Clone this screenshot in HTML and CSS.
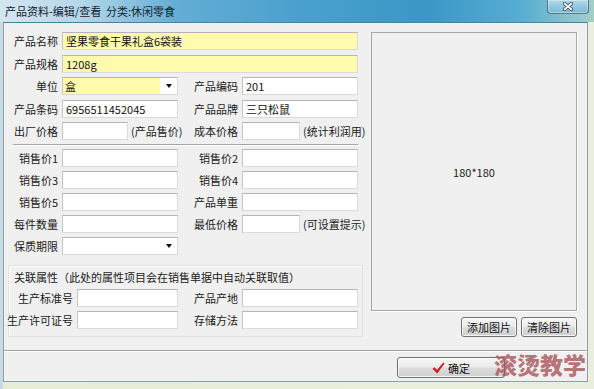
FILE: index.html
```html
<!DOCTYPE html>
<html lang="zh-CN">
<head>
    <meta charset="UTF-8">
    <title>产品资料-编辑/查看</title>
    <link rel="stylesheet" href="styles.css">
</head>
<body>
    <div class="window">
        <div class="titlebar">
            <span class="title">产品资料-编辑/查看&nbsp;&nbsp;分类:休闲零食</span>
            <span class="close">
                <svg width="10" height="9" viewBox="0 0 10 9">
                    <path d="M1.5 1.5 L8.5 7.5 M8.5 1.5 L1.5 7.5" stroke="#2a3b48" stroke-width="3.4" stroke-linecap="round"/>
                    <path d="M1.5 1.5 L8.5 7.5 M8.5 1.5 L1.5 7.5" stroke="#fff" stroke-width="1.8" stroke-linecap="round"/>
                </svg>
            </span>
        </div>

        <div class="panel">
            <div class="content">
                <div class="form">
                    <div class="grid grid-top">
                        <label class="lbl">产品名称</label>
                        <input class="field yellow span3" value="坚果零食干果礼盒6袋装" readonly>

                        <label class="lbl">产品规格</label>
                        <input class="field yellow span3" value="1208g" readonly>

                        <label class="lbl">单位</label>
                        <div class="combo">
                            <span class="val yellow">盒</span>
                            <span class="arrow"></span>
                        </div>
                        <label class="lbl">产品编码</label>
                        <input class="field" value="201" readonly>

                        <label class="lbl">产品条码</label>
                        <input class="field" value="6956511452045" readonly>
                        <label class="lbl">产品品牌</label>
                        <input class="field" value="三只松鼠" readonly>

                        <label class="lbl">出厂价格</label>
                        <div class="cell">
                            <input class="field short" readonly>
                            <span class="note">(产品售价)</span>
                        </div>
                        <label class="lbl">成本价格</label>
                        <div class="cell">
                            <input class="field shorter" readonly>
                            <span class="note">(统计利润用)</span>
                        </div>
                    </div>

                    <div class="sep"></div>

                    <div class="grid grid-mid">
                        <label class="lbl">销售价1</label>
                        <input class="field" readonly>
                        <label class="lbl">销售价2</label>
                        <input class="field" readonly>

                        <label class="lbl">销售价3</label>
                        <input class="field" readonly>
                        <label class="lbl">销售价4</label>
                        <input class="field" readonly>

                        <label class="lbl">销售价5</label>
                        <input class="field" readonly>
                        <label class="lbl">产品单重</label>
                        <input class="field" readonly>

                        <label class="lbl">每件数量</label>
                        <input class="field" readonly>
                        <label class="lbl">最低价格</label>
                        <div class="cell">
                            <input class="field shorter" readonly>
                            <span class="note">(可设置提示)</span>
                        </div>

                        <label class="lbl">保质期限</label>
                        <div class="combo">
                            <span class="val"></span>
                            <span class="arrow"></span>
                        </div>
                    </div>

                    <div class="group">
                        <div class="group-title">关联属性（此处的属性项目会在销售单据中自动关联取值）</div>
                        <div class="grid grid-group">
                            <label class="lbl">生产标准号</label>
                            <input class="field" readonly>
                            <label class="lbl">产品产地</label>
                            <input class="field" readonly>

                            <label class="lbl">生产许可证号</label>
                            <input class="field" readonly>
                            <label class="lbl">存储方法</label>
                            <input class="field" readonly>
                        </div>
                    </div>
                </div>

                <div class="side">
                    <div class="picture">180*180</div>
                    <div class="pic-buttons">
                        <button class="btn">添加图片</button>
                        <button class="btn">清除图片</button>
                    </div>
                </div>
            </div>

            <div class="footer">
                <button class="btn ok">
                    <svg width="13" height="12" viewBox="0 0 13 12">
                        <path d="M0.5 6.8 L2.6 5.2 L5 8 L11.2 0.4 L12.6 1.4 L5.2 11.6 Z" fill="#cc1c1c"/>
                    </svg>
                    确定
                </button>
            </div>
        </div>

        <div class="watermark">滚烫教学</div>
    </div>
</body>
</html>
```

FILE: styles.css
```css
* {
    box-sizing: border-box;
}
body {
    margin: 0;
    font-family: "Noto Sans CJK SC", "Microsoft YaHei", sans-serif;
    font-size: 11px;
    color: #1a1a1a;
}
.window {
    position: relative;
    width: 594px;
    height: 389px;
    overflow: hidden;
    background: linear-gradient(to right, #c8dbe4 0, #c8dbe4 3px, #e6edd6 3px, #e9efdc 100%);
}

/* title bar */
.titlebar {
    height: 22px;
    display: flex;
    align-items: flex-start;
    background: linear-gradient(to right, #d4e7f0 0%, #b2d6e8 14%, #62add5 30%, #4aa1cd 50%, #3a97c6 72%, #58aed3 88%, #a3cfc6 100%);
}
.title {
    padding-left: 5px;
    line-height: 22px;
    color: #15222c;
}
.close {
    margin-left: auto;
    margin-right: 5px;
    width: 42px;
    height: 14px;
    display: flex;
    align-items: center;
    justify-content: center;
    border: 1px solid rgba(30, 60, 85, 0.6);
    border-top: 0;
    border-radius: 0 0 4px 4px;
    background: linear-gradient(#b0d8ea, #78bad8);
    box-shadow: inset 0 0 0 1px rgba(255, 255, 255, 0.35);
}

/* dialog body */
.panel {
    margin-left: 3px;
    width: 585px;
    height: 360px;
    background: #f0f0f0;
    border: 1px solid #8d9fa9;
    border-top-color: #4d8099;
}
.content {
    height: 327px;
    padding-top: 9px;
    display: flex;
}
.form {
    width: 367px;
}
.grid {
    display: grid;
    grid-template-columns: 50px 116px 56px 116px;
    grid-auto-rows: 18px;
    column-gap: 4px;
    row-gap: 4px;
    margin-left: 4px;
}
.grid-top {
    row-gap: 4.5px;
}
.grid-group {
    grid-template-columns: 64px 101px 56px 116px;
    margin-left: 0;
}
.lbl {
    display: flex;
    justify-content: flex-end;
    align-items: center;
    white-space: nowrap;
    line-height: 18px;
}
.field {
    width: 100%;
    height: 18px;
    margin: 0;
    padding: 0 3px;
    font: inherit;
    color: #111;
    background: #fff;
    border: 1px solid #dadada;
    border-top-color: #b4b4b4;
    border-left-color: #c6c6c6;
    outline: none;
}
.yellow {
    background: #fffbac;
}
.span3 {
    grid-column: 2 / 5;
}
.short {
    width: 66px;
    flex: none;
}
.shorter {
    width: 58px;
    flex: none;
}
.cell {
    display: flex;
    align-items: center;
    gap: 4px;
    white-space: nowrap;
}
.note {
    margin-left: -1px;
}
.combo {
    display: flex;
    height: 18px;
    background: #fff;
    border: 1px solid #dadada;
    border-top-color: #b4b4b4;
    border-left-color: #c6c6c6;
}
.combo .val {
    flex: 1;
    padding-left: 2px;
    line-height: 16px;
}
.combo .arrow {
    width: 17px;
    display: flex;
    align-items: center;
    justify-content: center;
}
.combo .arrow::after {
    content: "";
    border-left: 3.5px solid transparent;
    border-right: 3.5px solid transparent;
    border-top: 4px solid #111;
}
.sep {
    margin: 4px 0 3px 9px;
    width: 345px;
    height: 2px;
    border-top: 1px solid #a6a6a6;
    border-bottom: 1px solid #fff;
}
.group {
    margin: 10px 0 0 4px;
    width: 355px;
    height: 72px;
    padding-top: 5px;
    border: 1px solid #e0e0e0;
    box-shadow: inset 1px 1px 0 #fff;
}
.group-title {
    padding-left: 5px;
    line-height: 12px;
    margin-bottom: 6px;
    white-space: nowrap;
}

/* picture column */
.side {
    width: 206px;
}
.picture {
    height: 279px;
    display: flex;
    align-items: center;
    justify-content: center;
    color: #222;
    border: 1px solid #a8a8a8;
    box-shadow: 1px 1px 0 #fff;
}
.pic-buttons {
    margin-top: 6px;
    display: flex;
    justify-content: flex-end;
    gap: 4px;
}
.btn {
    height: 20px;
    width: 56px;
    padding: 0;
    font: inherit;
    color: #111;
    border: 1px solid #707070;
    border-radius: 3px;
    background: linear-gradient(#f6f6f6 0%, #ebebeb 48%, #dcdcdc 52%, #cfcfcf 100%);
    box-shadow: inset 0 0 0 1px rgba(255, 255, 255, 0.8);
}

/* bottom bar */
.footer {
    height: 31px;
    padding-top: 6px;
    border-top: 1px solid #a2a2a2;
    box-shadow: inset 0 1px 0 #fff;
}
.ok {
    margin-left: 393px;
    width: 108px;
    height: 21px;
    display: flex;
    align-items: center;
    justify-content: center;
    gap: 3px;
}

.watermark {
    position: absolute;
    left: 494px;
    top: 349px;
    font-size: 23px;
    line-height: 30px;
    font-weight: 900;
    color: rgba(170, 88, 94, 0.82);
    white-space: nowrap;
}
```
